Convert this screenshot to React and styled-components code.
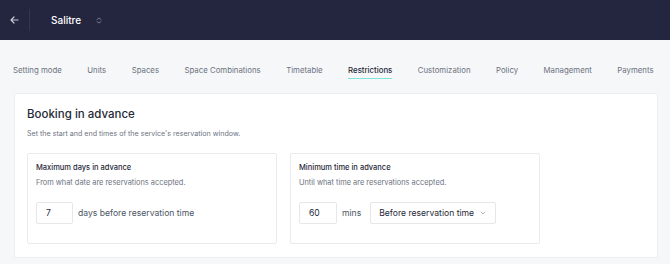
import React from 'react';
import styled, { createGlobalStyle } from 'styled-components';

const GlobalStyle = createGlobalStyle`
  * { box-sizing: border-box; }
  body {
    margin: 0;
    background: #f6f7f9;
    font-family: Inter, "Liberation Sans", sans-serif;
    -webkit-font-smoothing: antialiased;
  }
`;

const Header = styled.header`
  height: 40px;
  background: #24253f;
  display: flex;
  align-items: center;
  padding-left: 10px;
`;

const BackButton = styled.span`
  display: flex;
  align-items: center;
  color: #c9cad6;
  width: 9px;
`;

const Divider = styled.span`
  width: 1px;
  height: 22px;
  background: #34354f;
  margin-left: 10px;
  margin-right: 21px;
`;

const Title = styled.span`
  color: #ffffff;
  font-size: 10px;
  font-weight: 500;
`;

const Switcher = styled.span`
  display: flex;
  color: #7d7f98;
  margin-left: 15px;
`;

const Tabs = styled.nav`
  display: flex;
  gap: 25.5px;
  padding: 0 13px;
  margin-top: 24px;
  height: 29px;
`;

const Tab = styled.span`
  font-size: 7.8px;
  color: ${p => (p.active ? '#1f2937' : '#6b7280')};
  font-weight: ${p => (p.active ? 500 : 400)};
  line-height: 12px;
  padding-bottom: 2px;
  height: 14.5px;
  border-bottom: 1.5px solid ${p => (p.active ? '#7ee4dc' : 'transparent')};
  white-space: nowrap;
`;

const Card = styled.section`
  margin: 0 12px 0 14px;
  background: #fff;
  border: 1px solid #eceef2;
  border-radius: 2px;
  padding: 13px 12px 13px 12px;
  height: 165px;
`;

const Heading = styled.h2`
  margin: 0;
  font-size: 11.5px;
  font-weight: 500;
  color: #1f2937;
  line-height: 14px;
`;

const Lead = styled.p`
  margin: 8px 0 0;
  font-size: 7.1px;
  color: #6b7280;
  line-height: 10px;
`;

const Boxes = styled.div`
  display: flex;
  gap: 13px;
  margin-top: 14px;
`;

const Box = styled.div`
  width: 250px;
  height: 91px;
  border: 1px solid #e8eaee;
  border-radius: 2px;
  padding: 9px 8px;
`;

const BoxTitle = styled.div`
  font-size: 7.5px;
  font-weight: 500;
  color: #1f2937;
  line-height: 10px;
`;

const BoxText = styled.div`
  margin-top: 5px;
  font-size: 7.4px;
  color: #6b7280;
  line-height: 10px;
`;

const Row = styled.div`
  display: flex;
  align-items: center;
  margin-top: 14px;
  gap: 5px;
`;

const NumberInput = styled.div`
  width: ${p => p.w}px;
  height: 22px;
  border: 1px solid #e5e7eb;
  border-radius: 2px;
  display: flex;
  align-items: center;
  padding-left: ${p => p.pl}px;
  font-size: 8.6px;
  color: #1f2937;
`;

const Unit = styled.span`
  font-size: 8.6px;
  color: #4b5563;
  margin-right: ${p => p.mr || 0}px;
`;

const Select = styled.div`
  width: 126px;
  height: 22px;
  border: 1px solid #e5e7eb;
  border-radius: 2px;
  display: flex;
  align-items: center;
  justify-content: space-between;
  padding: 0 9px 0 8px;
  font-size: 8.6px;
  color: #1f2937;
`;

const tabs = [
  'Setting mode',
  'Units',
  'Spaces',
  'Space Combinations',
  'Timetable',
  'Restrictions',
  'Customization',
  'Policy',
  'Management',
  'Payments',
];

export default function App() {
  return (
    <>
      <GlobalStyle />
      <Header>
        <BackButton>
          <svg width="9" height="8" viewBox="0 0 9 8" fill="none" stroke="currentColor" strokeWidth="1.2" strokeLinecap="round" strokeLinejoin="round">
            <path d="M8 4H1M4 1L1 4l3 3" />
          </svg>
        </BackButton>
        <Divider />
        <Title>Salitre</Title>
        <Switcher>
          <svg width="6" height="7" viewBox="0 0 6 7" fill="none" stroke="currentColor" strokeWidth="0.9" strokeLinecap="round" strokeLinejoin="round">
            <path d="M1 2.5l2-1.5 2 1.5M1 4.5l2 1.5 2-1.5" />
          </svg>
        </Switcher>
      </Header>
      <Tabs>
        {tabs.map(t => (
          <Tab key={t} active={t === 'Restrictions'}>{t}</Tab>
        ))}
      </Tabs>
      <Card>
        <Heading>Booking in advance</Heading>
        <Lead>Set the start and end times of the service's reservation window.</Lead>
        <Boxes>
          <Box>
            <BoxTitle>Maximum days in advance</BoxTitle>
            <BoxText>From what date are reservations accepted.</BoxText>
            <Row>
              <NumberInput w={37} pl={9}>7</NumberInput>
              <Unit>days before reservation time</Unit>
            </Row>
          </Box>
          <Box>
            <BoxTitle>Minimum time in advance</BoxTitle>
            <BoxText>Until what time are reservations accepted.</BoxText>
            <Row>
              <NumberInput w={38} pl={9}>60</NumberInput>
              <Unit mr={4}>mins</Unit>
              <Select>
                Before reservation time
                <svg width="6" height="4" viewBox="0 0 6 4" fill="none" stroke="#9ca3af" strokeWidth="0.8" strokeLinecap="round" strokeLinejoin="round">
                  <path d="M1 1l2 2 2-2" />
                </svg>
              </Select>
            </Row>
          </Box>
        </Boxes>
      </Card>
    </>
  );
}
